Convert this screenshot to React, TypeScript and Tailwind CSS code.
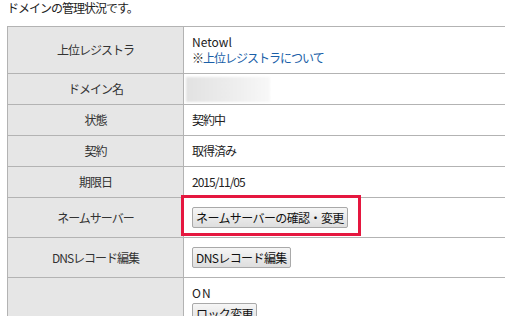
import React from "react";

const font = { fontFamily: '"Noto Sans CJK JP", "Noto Sans", sans-serif' };

function Btn({ children }: { children: React.ReactNode }) {
  return (
    <span className="inline-flex h-[21px] items-center rounded-[2px] border border-[#a9a9a9] bg-gradient-to-b from-[#f6f6f6] to-[#dedede] px-[3px] text-[12px] leading-none tracking-[-0.6px] text-[#111]">
      {children}
    </span>
  );
}

export default function App() {
  const label = "bg-[#e6e6e6] border border-[#b3b3b3] text-center align-middle text-[12px] tracking-[-1px] text-[#333] w-[176px]";
  const val = "border border-[#b3b3b3] bg-white align-middle pl-[8px] text-[12px] tracking-[-1px] text-[#222]";
  return (
    <div className="relative h-[316px] w-[505px] overflow-hidden bg-white" style={font}>
      <div className="pl-[7px] pt-[1px] text-[12px] leading-[14px] tracking-[-1px] text-[#222]">ドメインの管理状況です。</div>
      <table className="ml-[7px] mt-[11px] w-[540px] border-collapse">
        <tbody>
          <tr className="h-[47px]">
            <td className={label}>上位レジストラ</td>
            <td className={val}>
              <div className="leading-[16px] tracking-[0px]">Netowl</div>
              <div className="leading-[16px]">
                ※<span className="text-[#1a5fa8]">上位レジストラについて</span>
              </div>
            </td>
          </tr>
          <tr className="h-[31px]">
            <td className={label}>ドメイン名</td>
            <td className={val}>
              <div className="-ml-[6px] h-[25px] w-[84px] bg-gradient-to-r from-[#e2e2e2] via-[#ececec] to-[#f8f8f8] blur-[1px]" />
            </td>
          </tr>
          <tr className="h-[31px]">
            <td className={label}>状態</td>
            <td className={val}>契約中</td>
          </tr>
          <tr className="h-[31px]">
            <td className={label}>契約</td>
            <td className={val}>取得済み</td>
          </tr>
          <tr className="h-[31px]">
            <td className={label}>期限日</td>
            <td className={`${val} tracking-[-0.5px]`}>2015/11/05</td>
          </tr>
          <tr className="h-[40px]">
            <td className={label}>ネームサーバー</td>
            <td className={val}>
              <Btn>ネームサーバーの確認・変更</Btn>
            </td>
          </tr>
          <tr className="h-[40px]">
            <td className={label}>DNSレコード編集</td>
            <td className={val}>
              <Btn>DNSレコード編集</Btn>
            </td>
          </tr>
          <tr className="h-[60px]">
            <td className={label}></td>
            <td className={`${val} align-top pt-[8px]`}>
              <div className="leading-[14px] tracking-[1px]">ON</div>
              <div className="mt-[3px]">
                <Btn>ロック変更</Btn>
              </div>
            </td>
          </tr>
        </tbody>
      </table>
      <div className="absolute left-[181px] top-[195px] h-[41px] w-[180px] border-[3px] border-[#e5173f]" />
    </div>
  );
}
